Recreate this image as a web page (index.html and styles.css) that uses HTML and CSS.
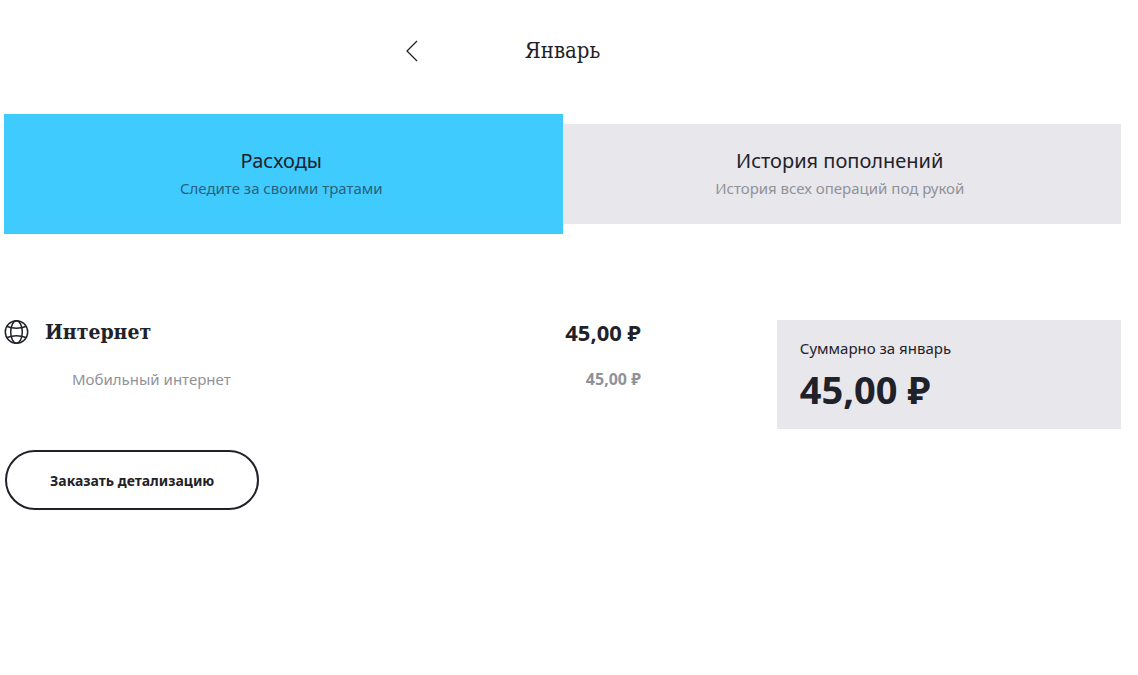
FILE: index.html
```html
<!DOCTYPE html>
<html lang="ru">
<head>
    <meta charset="UTF-8">
    <meta name="viewport" content="width=device-width, initial-scale=1.0">
    <title>Расходы за январь</title>
    <link rel="stylesheet" href="styles.css">
</head>
<body>
    <header class="month">
        <button class="back" type="button" aria-label="Предыдущий месяц">
            <svg width="14" height="22" viewBox="0 0 14 22"><path d="M12 1L2 11l10 10"/></svg>
        </button>
        <h1>Январь</h1>
    </header>

    <nav class="tabs">
        <a class="tab active" href="#expenses">
            <span class="tab-title">Расходы</span>
            <span class="tab-text">Следите за своими тратами</span>
        </a>
        <a class="tab" href="#history">
            <span class="tab-title">История пополнений</span>
            <span class="tab-text">История всех операций под рукой</span>
        </a>
    </nav>

    <main class="content" id="expenses">
        <section class="details">
            <div class="row">
                <svg class="globe" width="25" height="24" viewBox="0 0 25 24">
                    <circle cx="12.5" cy="12" r="11.2"/>
                    <ellipse cx="12.5" cy="12" rx="5.8" ry="11.2"/>
                    <path d="M3 6.5Q12.5 10 22 6.5M3 17.5Q12.5 14 22 17.5"/>
                </svg>
                <h2>Интернет</h2>
                <span class="amount">45,00 ₽</span>
            </div>
            <div class="row sub">
                <span>Мобильный интернет</span>
                <span class="amount">45,00 ₽</span>
            </div>
            <button class="order" type="button">Заказать детализацию</button>
        </section>

        <aside class="total">
            <p>Суммарно за январь</p>
            <strong>45,00 ₽</strong>
        </aside>
    </main>
</body>
</html>
```

FILE: styles.css
```css
body {
    margin: 0;
    padding: 0 17px 0 4px;
    background: #fff;
    color: #1f2229;
    font-family: "Noto Sans", "Open Sans", sans-serif;
    font-size: 15px;
    line-height: 20px;
}
h1, h2, p {
    margin: 0;
}
h1, h2 {
    font-family: "DejaVu Serif Condensed", "DejaVu Serif", serif;
    line-height: 28px;
}
h1 {
    font-size: 22px;
    font-weight: normal;
}
h2 {
    font-size: 21px;
}
svg {
    display: block;
    fill: none;
    stroke: #1f2229;
}
.month {
    display: grid;
    grid-template-columns: 1fr auto 1fr;
    align-items: center;
    padding: 37px 0 49px;
}
.back {
    justify-self: end;
    margin-right: 106px;
    padding: 0;
    border: none;
    background: none;
    cursor: pointer;
}
.back svg {
    stroke-width: 1.3;
}
.tabs {
    display: grid;
    grid-template-columns: 1fr 1fr;
    align-items: center;
}
.tab {
    display: flex;
    flex-direction: column;
    justify-content: center;
    box-sizing: border-box;
    height: 100px;
    padding: 0 4px 2px 0;
    background: #e8e7ec;
    color: #1f2229;
    text-align: center;
    text-decoration: none;
}
.tab.active {
    height: 120px;
    background: #40cbff;
}
.tab-title {
    font-size: 20px;
    line-height: 30px;
}
.tab-text {
    line-height: 24px;
    color: #8f9299;
}
.active .tab-text {
    color: #2a617a;
}
.content {
    display: grid;
    grid-template-columns: 37fr 20fr;
    column-gap: 136px;
    align-items: start;
    padding-top: 86px;
}
.row {
    display: flex;
    align-items: center;
    gap: 16px;
    height: 24px;
}
.globe {
    stroke-width: 1.5;
}
.amount {
    margin-left: auto;
    font-size: 22px;
    font-weight: bold;
}
.sub {
    padding: 23px 0 17px 68px;
    color: #8f9299;
}
.sub .amount {
    font-size: 16px;
}
.order {
    margin: 42px 0 0 1px;
    height: 60px;
    padding: 0 43px;
    border: 2px solid #1f2229;
    border-radius: 30px;
    background: #fff;
    color: #1f2229;
    font-family: inherit;
    font-size: 14px;
    font-weight: bold;
    cursor: pointer;
}
.total {
    padding: 18px 23px 17px;
    background: #e8e7ec;
}
.total strong {
    display: block;
    padding-top: 8px;
    font-size: 38px;
    line-height: 46px;
}
```
